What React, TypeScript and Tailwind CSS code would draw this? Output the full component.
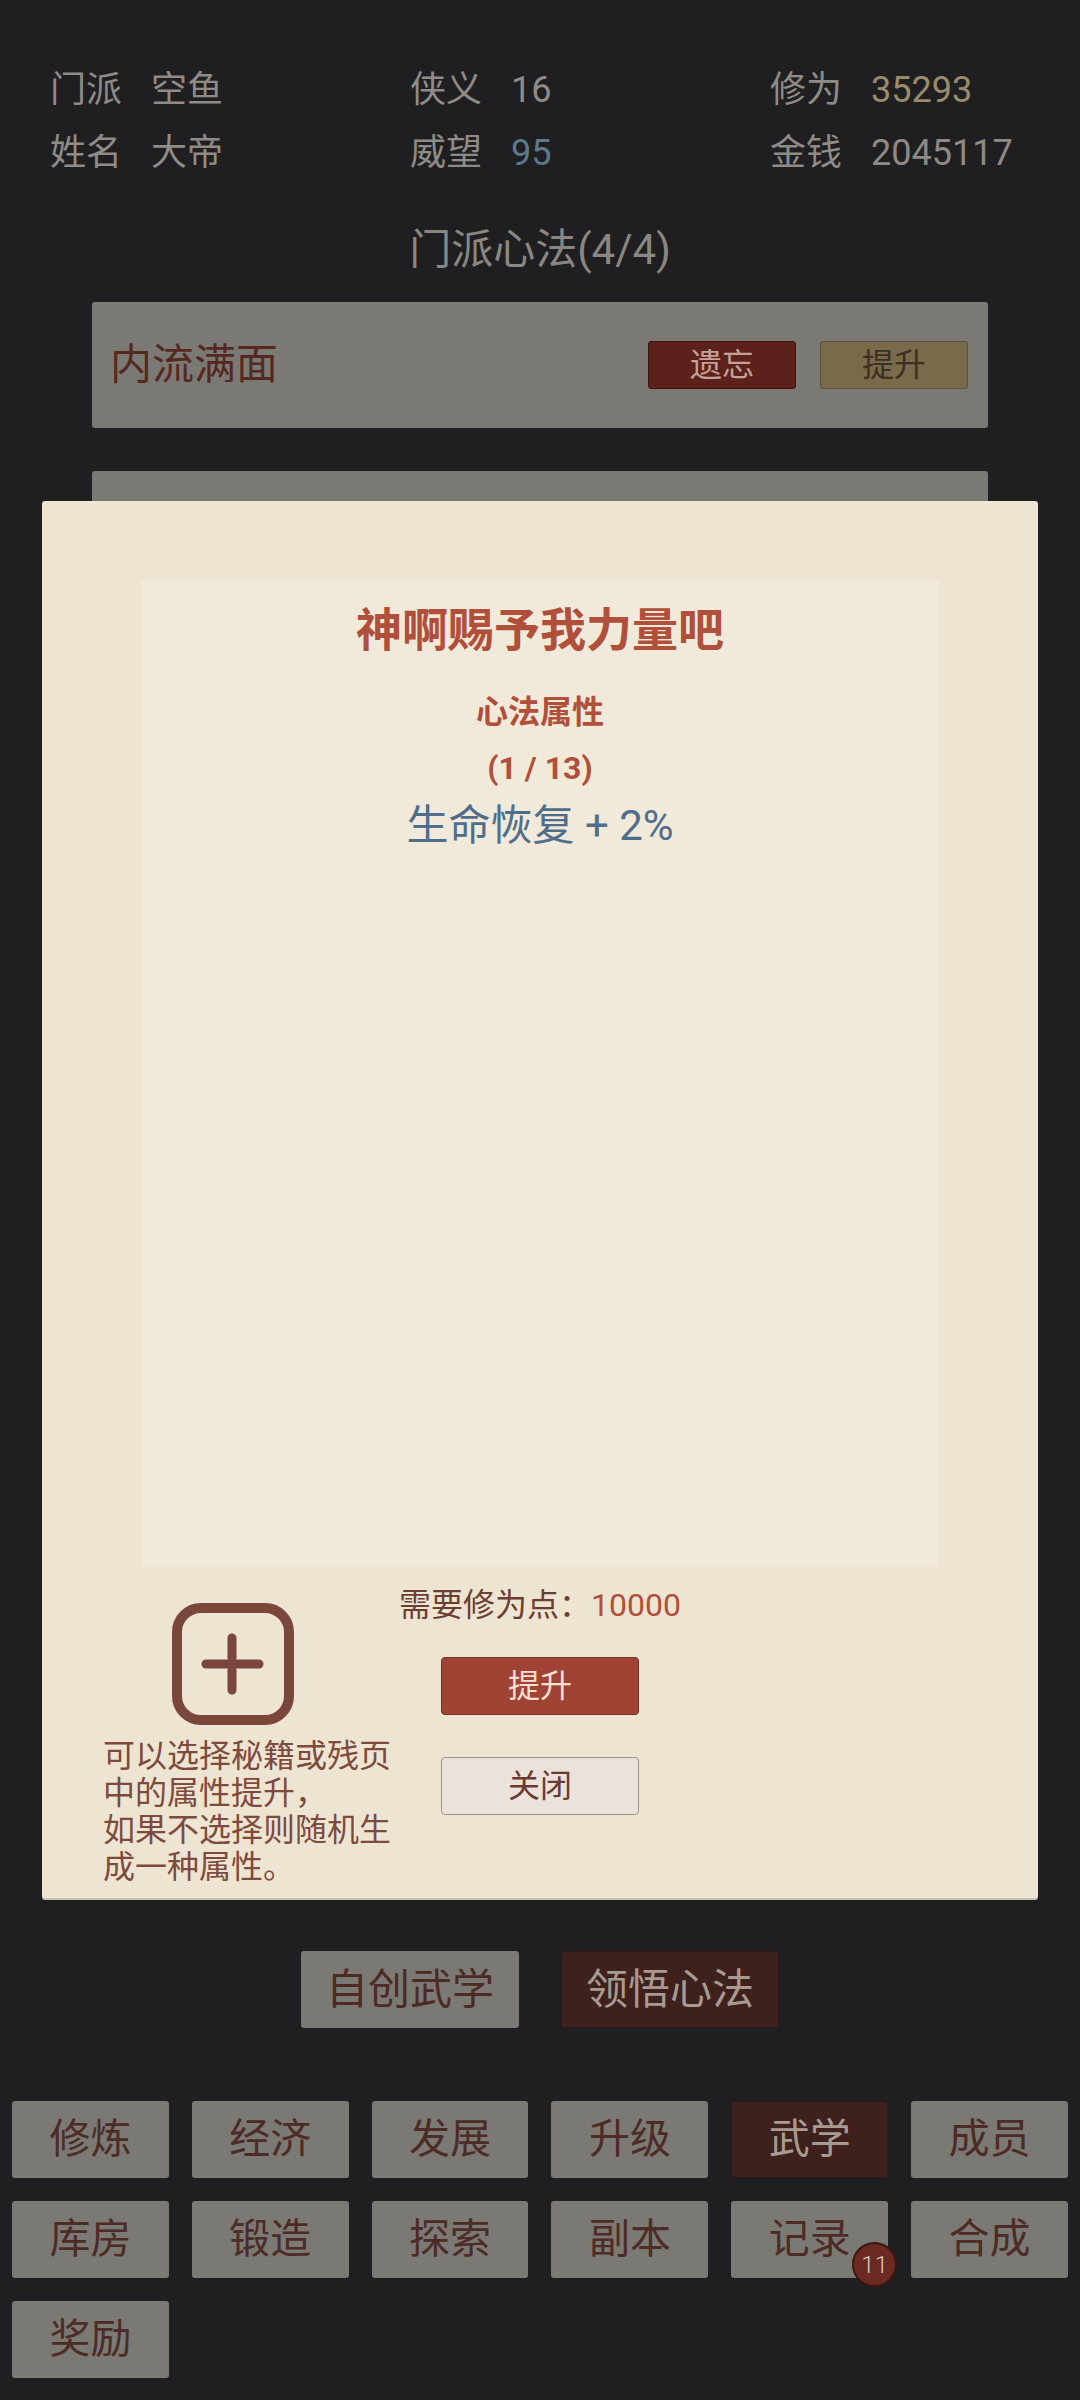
import * as React from "react"

const FONT = { fontFamily: 'Roboto, "Noto Sans CJK SC", "Noto Sans", sans-serif' }

const stats = [
  [
    { label: "门派", value: "空鱼", color: "text-[#8f8b86]" },
    { label: "姓名", value: "大帝", color: "text-[#8f8b86]" },
  ],
  [
    { label: "侠义", value: "16", color: "text-[#8f8b86]" },
    { label: "威望", value: "95", color: "text-[#5b7a8b]" },
  ],
  [
    { label: "修为", value: "35293", color: "text-[#9a8c6b]" },
    { label: "金钱", value: "2045117", color: "text-[#8f8a85]" },
  ],
]

const navRows = [
  ["修炼", "经济", "发展", "升级", "武学", "成员"],
  ["库房", "锻造", "探索", "副本", "记录", "合成"],
  ["奖励"],
]

function PlusBox() {
  return (
    <svg width="122" height="122" viewBox="0 0 122 122" fill="none">
      <rect x="5" y="5" width="112" height="112" rx="24" stroke="#7b463c" strokeWidth="10" />
      <line x1="34" y1="61" x2="87" y2="61" stroke="#7b463c" strokeWidth="9" strokeLinecap="round" />
      <line x1="60" y1="35" x2="60" y2="87" stroke="#7b463c" strokeWidth="9" strokeLinecap="round" />
    </svg>
  )
}

function Skill({ name }: { name: string }) {
  return (
    <div className="flex h-[126px] items-center justify-between rounded-[3px] bg-[#7b7974] pl-[18px] pr-[20px]">
      <span className="text-[42px] leading-none text-[#55291f]">{name}</span>
      <div className="flex gap-[24px]">
        <button className="h-[48px] w-[148px] rounded-[3px] border border-[#3e1712] bg-[#5c211b] text-[32px] leading-none text-[#c4a197]">
          遗忘
        </button>
        <button className="h-[48px] w-[148px] rounded-[3px] border border-[#5e5238] bg-[#786a4b] text-[32px] leading-none text-[#3b3023]">
          提升
        </button>
      </div>
    </div>
  )
}

export default function App() {
  return (
    <main className="relative h-[2400px] w-[1080px] overflow-hidden bg-[#1f1f21]" style={FONT}>

      {/* Stats header */}
      <div className="grid grid-cols-[360px_360px_310px] pl-[50px] pt-[58px]">
        {stats.map((col, i) => (
          <div key={i}>
            {col.map((s) => (
              <div key={s.label} className="flex h-[63px] items-center text-[36px]">
                <span className="w-[101px] text-[#8f8b86]">{s.label}</span>
                <span className={s.color}>{s.value}</span>
              </div>
            ))}
          </div>
        ))}
      </div>

      <p className="mt-[36px] h-[60px] text-center text-[42px] leading-[60px] text-[#8a8782]">门派心法(4/4)</p>

      {/* Skill list */}
      <div className="mx-[92px] mt-[22px] flex h-[1649px] flex-col gap-[43px] overflow-hidden">
        <Skill name="内流满面" />
        <Skill name="金刚护体" />
        <Skill name="凌波微步" />
        <Skill name="北冥神功" />
      </div>

      <div className="flex justify-center gap-[42px]">
        <button className="h-[77px] w-[218px] rounded-[3px] bg-[#7b7974] text-[42px] text-[#4d2a24]">自创武学</button>
        <button className="h-[77px] w-[218px] rounded-[3px] border border-[#2e1814] bg-[#3e211c] text-[42px] text-[#a89a90]">领悟心法</button>
      </div>

      {/* Bottom nav */}
      <div className="mt-[73px] flex flex-col gap-[23px] px-[12px]">
        {navRows.map((row, r) => (
          <div key={r} className="grid grid-cols-6 gap-[23px]">
            {row.map((n) => (
              <div
                key={n}
                className={`relative flex h-[77px] items-center justify-center rounded-[3px] text-[41px] ${
                  n === "武学" ? "border border-[#2e1814] bg-[#3e211c] text-[#a99b92]" : "bg-[#7b7974] text-[#4d2b26]"
                }`}
              >
                {n}
                {n === "记录" && (
                  <span className="absolute bottom-[-9px] right-[-9px] flex h-[45px] w-[45px] items-center justify-center rounded-full border-2 border-[#3a1713] bg-[#6b2a22] text-[24px] font-light text-[#d9c9c0]">
                    11
                  </span>
                )}
              </div>
            ))}
          </div>
        ))}
      </div>

      {/* Modal */}
      <div className="absolute left-[42px] top-[501px] flex h-[1397px] w-[996px] flex-col rounded-[3px] bg-[#ede4d2] shadow-[0_2px_0_#c9c1b0]">
        <div className="mx-auto mt-[79px] flex h-[986px] w-[798px] flex-col items-center bg-[#f1e9da] pt-[20px]">
          <p className="h-[60px] text-[46px] font-bold leading-[60px] text-[#b0503a]">神啊赐予我力量吧</p>
          <p className="mt-[24px] h-[56px] text-[32px] font-bold leading-[56px] text-[#b0503a]">心法属性</p>
          <p className="h-[56px] text-[32px] font-bold leading-[56px] text-[#b0503a]">(1 / 13)</p>
          <p className="mt-[2px] h-[56px] text-[42px] leading-[56px] text-[#4f6e8b]">生命恢复 + 2%</p>
        </div>

        <div className="grid grid-cols-[357px_282px_357px]">
          <div className="flex flex-col pl-[61px] pt-[37px]">
            <div className="ml-[69px]">
              <PlusBox />
            </div>
            <p className="mt-[13px] w-[290px] text-[32px] leading-[37px] text-[#7d4a3d]">
              可以选择秘籍或残页中的属性提升，
              <br />
              如果不选择则随机生成一种属性。
            </p>
          </div>

          <div className="flex flex-col items-center pt-[19px]">
            <p className="h-[40px] whitespace-nowrap text-[32px] leading-[40px] text-[#6b3e34]">
              需要修为点：<span className="text-[#b0503a]">10000</span>
            </p>
            <button className="mt-[32px] h-[58px] w-[198px] rounded-[4px] border border-[#7a2f25] bg-[#a04234] text-[32px] text-[#f5e0d3]">
              提升
            </button>
            <button className="mt-[42px] h-[58px] w-[198px] rounded-[4px] border border-[#9c948c] bg-[#ebe3db] text-[32px] text-[#6b3a30]">
              关闭
            </button>
          </div>
          <div />
        </div>
      </div>
    </main>
  )
}
